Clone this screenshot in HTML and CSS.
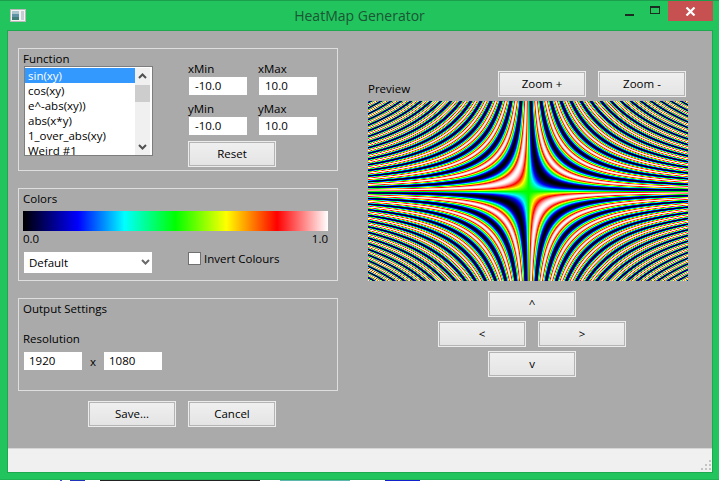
FILE: index.html
```html
<!DOCTYPE html>
<html lang="en">
<head>
  <meta charset="UTF-8" />
  <title>HeatMap Generator</title>
  <link rel="stylesheet" href="styles.css">
</head>
<body>
  <div class="window">
    <div class="titlebar">
      <svg class="app-icon" width="16" height="13" viewBox="0 0 16 13">
        <rect x="0.5" y="0.5" width="15" height="12" fill="#f2f2f2" stroke="#b9b9b9" />
        <rect x="2" y="2" width="7" height="9" fill="#5f93a8" />
        <rect x="2" y="2" width="7" height="3" fill="#a9c6cf" />
        <rect x="2" y="8" width="7" height="3" fill="#3f7f78" />
        <rect x="11" y="2" width="3" height="9" fill="#c4cdd2" />
      </svg>
      <div class="title">HeatMap Generator</div>
      <div class="win-controls">
        <div class="win-btn"><span class="min-glyph"></span></div>
        <div class="win-btn"><span class="max-glyph"></span></div>
        <div class="win-btn close-btn">
          <svg width="11" height="9" viewBox="0 0 11 9">
            <path d="M1.5 0.5 L9.5 8.5 M9.5 0.5 L1.5 8.5" stroke="#fff" stroke-width="2.2" fill="none" />
          </svg>
        </div>
      </div>
    </div>

    <div class="client">
      <div class="main">
        <!-- Columna izquierda -->
        <div class="left-col">
          <div class="group group-function">
            <div class="group-title">Function</div>
            <div class="function-row">
              <div class="listbox">
                <div class="list-items">
                  <div class="list-item selected">sin(xy)</div>
                  <div class="list-item">cos(xy)</div>
                  <div class="list-item">e^-abs(xy))</div>
                  <div class="list-item">abs(x*y)</div>
                  <div class="list-item">1_over_abs(xy)</div>
                  <div class="list-item">Weird #1</div>
                </div>
                <div class="scrollbar">
                  <svg width="15" height="17" viewBox="0 0 15 17"><path d="M4 10 L7.5 6.5 L11 10" stroke="#505050" stroke-width="2" fill="none" /></svg>
                  <div class="scroll-thumb"></div>
                  <div class="scroll-space"></div>
                  <svg width="15" height="17" viewBox="0 0 15 17"><path d="M4 7 L7.5 10.5 L11 7" stroke="#505050" stroke-width="2" fill="none" /></svg>
                </div>
              </div>
              <div class="range-box">
                <div class="range-grid">
                  <div class="range-field"><label>xMin</label><div class="input">-10.0</div></div>
                  <div class="range-field"><label>xMax</label><div class="input">10.0</div></div>
                  <div class="range-field"><label>yMin</label><div class="input">-10.0</div></div>
                  <div class="range-field"><label>yMax</label><div class="input">10.0</div></div>
                </div>
                <div class="btn reset-btn">Reset</div>
              </div>
            </div>
          </div>

          <div class="group group-colors">
            <div class="group-title">Colors</div>
            <div class="colorbar"></div>
            <div class="colorbar-labels"><span>0.0</span><span>1.0</span></div>
            <div class="colors-row">
              <div class="select">
                <span>Default</span>
                <svg width="11" height="8" viewBox="0 0 11 8"><path d="M2 2 L5.5 5.5 L9 2" stroke="#6a6a6a" stroke-width="2" fill="none" /></svg>
              </div>
              <div class="checkbox-row"><span class="checkbox"></span><span>Invert Colours</span></div>
            </div>
          </div>

          <div class="group group-output">
            <div class="group-title">Output Settings</div>
            <div class="resolution-label">Resolution</div>
            <div class="resolution-row">
              <div class="input">1920</div>
              <span class="times">x</span>
              <div class="input">1080</div>
            </div>
          </div>

          <div class="dialog-buttons">
            <div class="btn">Save...</div>
            <div class="btn">Cancel</div>
          </div>
        </div>

        <!-- Columna derecha -->
        <div class="right-col">
          <div class="preview-head">
            <span class="preview-label">Preview</span>
            <div class="zoom-buttons">
              <div class="btn">Zoom +</div>
              <div class="btn">Zoom -</div>
            </div>
          </div>
          <canvas id="preview" width="320" height="180"></canvas>
          <div class="nav">
            <div class="btn">^</div>
            <div class="nav-row">
              <div class="btn">&lt;</div>
              <div class="btn">&gt;</div>
            </div>
            <div class="btn">v</div>
          </div>
        </div>
      </div>
      <div class="statusbar">
        <svg width="11" height="11" viewBox="0 0 11 11" fill="#c4c4c4">
          <rect x="8" y="0" width="2" height="2" />
          <rect x="4" y="4" width="2" height="2" /><rect x="8" y="4" width="2" height="2" />
          <rect x="0" y="8" width="2" height="2" /><rect x="4" y="8" width="2" height="2" /><rect x="8" y="8" width="2" height="2" />
        </svg>
      </div>
    </div>
  </div>
  <div class="desktop-strip"></div>
  <script src="heatmap.js"></script>
</body>
</html>
```

FILE: styles.css
```css
html, body {
  margin: 0;
  padding: 0;
}

body {
  width: 719px;
  height: 481px;
  overflow: hidden;
  background: #fff;
  font-family: "Open Sans", "Noto Sans", sans-serif;
  font-size: 11.5px;
  color: #000;
}

.window {
  height: 480px;
  box-sizing: border-box;
  background: #22c55d;
  border-top: 1px solid #1c9f4d;
  border-bottom: 1px solid #1fb355;
  padding: 0 7px 7px 8px;
  display: flex;
  flex-direction: column;
}

/* Barra de titulo */
.titlebar {
  height: 30px;
  flex: none;
  margin: 0 -7px 0 -8px;
  display: grid;
  grid-template-columns: 1fr auto 1fr;
  align-items: start;
  position: relative;
}

.app-icon {
  margin: 8px 0 0 10px;
}

.title {
  font-size: 14px;
  line-height: 20px;
  margin-top: 5px;
  color: #1b5534;
}

.win-controls {
  display: flex;
  justify-content: flex-end;
  margin-right: 6px;
}

.win-btn {
  width: 26px;
  height: 20px;
  display: flex;
  align-items: center;
  justify-content: center;
}

.close-btn {
  width: 45px;
  background: #c75050;
}

.min-glyph {
  width: 9px;
  height: 2px;
  margin-top: 7px;
  background: #1b2b22;
}

.max-glyph {
  width: 8px;
  height: 5px;
  margin-top: -2px;
  border: 1px solid #1b2b22;
  border-top-width: 2px;
}

.client {
  flex: 1;
  display: flex;
  flex-direction: column;
  min-height: 0;
  background: #aaaaaa;
  box-shadow: 0 0 0 1px #1ea850;
}

.main {
  flex: 1;
  display: flex;
  gap: 30px;
  padding: 17px 0 0 10px;
}

.statusbar {
  height: 22px;
  flex: none;
  border-top: 1px solid #d6d6d6;
  background: #f0f0f0;
  display: flex;
  justify-content: flex-end;
  align-items: flex-end;
  padding: 0 0 1px;
}

.desktop-strip {
  height: 1px;
  background: linear-gradient(90deg, #fff 60px, #3b4fd0 60px, #3b4fd0 62px, #fff 62px, #fff 70px, #2233bb 70px, #2233bb 85px, #fff 85px, #fff 100px, #222 100px, #222 260px, #fff 260px, #fff 280px, #5fb8b0 280px, #5fb8b0 350px, #fff 350px, #fff 385px, #1122cc 385px, #1122cc 420px, #fff 420px);
}

/* Grupos */
.left-col {
  width: 320px;
  display: flex;
  flex-direction: column;
}

.group {
  box-sizing: border-box;
  border: 1px solid #dedede;
  padding: 2px 4px 0;
}

.group-title {
  line-height: 16px;
}

.group-function {
  height: 123px;
}

.group-colors {
  height: 93px;
  margin-top: 17px;
}

.group-output {
  height: 93px;
  margin-top: 17px;
}

.function-row {
  display: flex;
  margin-top: -1px;
}

/* Lista de funciones */
.listbox {
  width: 129px;
  height: 90px;
  box-sizing: border-box;
  margin-left: 1px;
  border: 1px solid #7d7d7d;
  background: #fff;
  display: flex;
  padding: 1px 2px 0 0;
  overflow: hidden;
}

.list-items {
  flex: 1;
  overflow: hidden;
}

.list-item {
  height: 15px;
  line-height: 15px;
  padding-left: 3px;
  white-space: nowrap;
}

.list-item.selected {
  background: #3399ff;
  color: #fff;
}

.scrollbar {
  width: 15px;
  flex: none;
  background: #f0f0f0;
  display: flex;
  flex-direction: column;
}

.scroll-thumb {
  height: 17px;
  flex: none;
  background: #cdcdcd;
}

.scroll-space {
  flex: 1;
}

/* Rango */
.range-box {
  margin: -5px 0 0 35px;
}

.range-grid {
  display: grid;
  grid-template-columns: 70px 70px;
  row-gap: 6px;
}

.range-field label {
  display: block;
  line-height: 16px;
}

.input {
  width: 58px;
  height: 18px;
  line-height: 18px;
  box-sizing: border-box;
  background: #fff;
  padding-left: 5px;
}

.range-field .input {
  margin-left: 1px;
  padding-left: 6px;
}

.btn {
  width: 88px;
  height: 26px;
  box-sizing: border-box;
  border: 1px solid #ececec;
  box-shadow: inset 0 0 0 1px #b4b4b4;
  background: linear-gradient(#f0f0f0, #e4e4e4);
  line-height: 23px;
  text-align: center;
}

.reset-btn {
  margin-top: 6px;
}

/* Colores */
.colorbar {
  height: 20px;
  margin-top: 4px;
  width: 305px;
  background: linear-gradient(90deg, #000 0%, #00f 18%, #0ff 33.3%, #0f0 50%, #ff0 66.7%, #f00 83.3%, #fff 100%);
}

.colorbar-labels {
  width: 305px;
  display: flex;
  justify-content: space-between;
  line-height: 16px;
}

.colors-row {
  display: flex;
  align-items: flex-start;
  margin-top: 5px;
}

.select {
  width: 128px;
  height: 21px;
  box-sizing: border-box;
  margin-left: 1px;
  background: #fff;
  padding: 0 1px 1px 5px;
  display: flex;
  align-items: center;
  justify-content: space-between;
}

.checkbox-row {
  display: flex;
  align-items: center;
  gap: 3px;
  margin-left: 36px;
  line-height: 13px;
}

.checkbox {
  width: 13px;
  height: 13px;
  box-sizing: border-box;
  border: 1px solid #707070;
  background: #fff;
}

/* Salida */
.resolution-label {
  line-height: 16px;
  margin-top: 14px;
}

.resolution-row {
  display: flex;
  align-items: center;
  margin: 5px 0 0 1px;
}

.times {
  width: 22px;
  text-align: center;
}

.dialog-buttons {
  display: flex;
  justify-content: center;
  gap: 12px;
  margin: 10px 0 0 4px;
  width: 320px;
}

/* Vista previa */
.right-col {
  width: 320px;
  padding-top: 23px;
}

.preview-head {
  height: 30px;
  display: flex;
  justify-content: space-between;
}

.preview-label {
  margin-top: 10px;
  line-height: 16px;
}

.zoom-buttons {
  display: flex;
  gap: 12px;
  margin-right: 2px;
}

#preview {
  display: block;
  width: 320px;
  height: 180px;
  image-rendering: pixelated;
}

.nav {
  width: 188px;
  margin: 10px 0 0 70px;
  display: flex;
  flex-direction: column;
  align-items: center;
  gap: 4px;
}

.nav-row {
  display: flex;
  gap: 12px;
}
```

FILE: heatmap.js
```js
// Dibuja sin(xy) con la paleta por defecto
const canvas = document.getElementById("preview");
const ctx = canvas.getContext("2d");
const stops = [
  [0, 0, 0],
  [0, 0, 255],
  [0, 255, 255],
  [0, 255, 0],
  [255, 255, 0],
  [255, 0, 0],
  [255, 255, 255]
];

function colorAt(v) {
  const pos = Math.min(v * 6, 5.999);
  const i = Math.floor(pos);
  const t = pos - i;
  return stops[i].map((c, k) => c + (stops[i + 1][k] - c) * t);
}

const w = canvas.width;
const h = canvas.height;
const img = ctx.createImageData(w, h);
for (let j = 0; j < h; j++) {
  for (let i = 0; i < w; i++) {
    const x = -10 + 20 * i / w;
    const y = -10 + 20 * j / h;
    const c = colorAt((Math.sin(x * y) + 1) / 2);
    const p = (j * w + i) * 4;
    img.data[p] = c[0];
    img.data[p + 1] = c[1];
    img.data[p + 2] = c[2];
    img.data[p + 3] = 255;
  }
}
ctx.putImageData(img, 0, 0);
```
